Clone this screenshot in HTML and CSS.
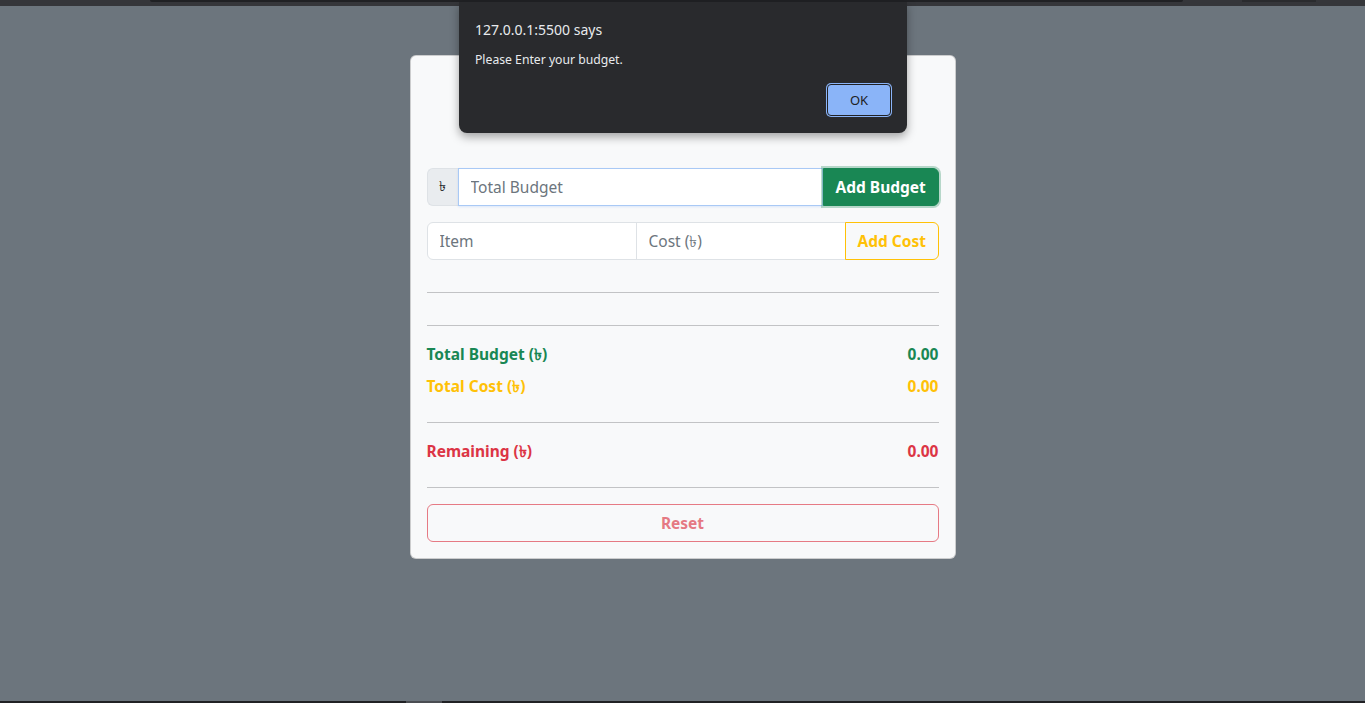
FILE: index.html
```html
<!DOCTYPE html>
<html lang="en">
<head>
<meta charset="utf-8">
<title>Budget Calculator</title>
<link rel="stylesheet" href="styles.css">
</head>
<body>
  <div class="chrome-top"><div class="chrome-bar"></div><div class="chrome-pill"></div></div>
  <main class="page">
    <section class="card">
      <div class="card-body">
        <div class="input-group budget-group">
          <span class="addon">৳</span>
          <input class="field field-focus" type="number" placeholder="Total Budget">
          <button class="btn btn-success">Add Budget</button>
        </div>
        <div class="input-group cost-group">
          <input class="field" type="text" placeholder="Item">
          <input class="field" type="number" placeholder="Cost (৳)">
          <button class="btn btn-outline-warning">Add Cost</button>
        </div>
        <hr class="rule">
        <ul class="expense-list"></ul>
        <hr class="rule">
        <div class="summary-row text-success"><span>Total Budget (৳)</span><span>0.00</span></div>
        <div class="summary-row text-warning"><span>Total Cost (৳)</span><span>0.00</span></div>
        <hr class="rule">
        <div class="summary-row text-danger"><span>Remaining (৳)</span><span>0.00</span></div>
        <hr class="rule">
        <button class="btn btn-reset" disabled>Reset</button>
      </div>
    </section>
    <div class="dialog" role="alertdialog">
      <div class="dialog-title">127.0.0.1:5500 says</div>
      <div class="dialog-msg">Please Enter your budget.</div>
      <div class="dialog-actions"><button class="dialog-ok">OK</button></div>
    </div>
  </main>
  <div class="chrome-bottom"><div class="chrome-tab"></div></div>
</body>
</html>
```

FILE: styles.css
```css
* { box-sizing: border-box; }
html, body { height: 100%; }
body {
  margin: 0;
  background: #6c757d;
  font-family: "Noto Sans", "Open Sans", "DejaVu Sans", sans-serif;
  color: #212529;
  display: flex;
  flex-direction: column;
  overflow: hidden;
}
.chrome-top {
  height: 6px;
  background: #35363a;
  position: relative;
  flex: none;
}
.chrome-bar {
  position: absolute;
  left: 150px;
  width: 1033px;
  top: 0;
  height: 2px;
  background: #202124;
  border-radius: 0 0 4px 4px;
}
.chrome-pill {
  position: absolute;
  left: 1242px;
  width: 74px;
  top: 0;
  height: 2px;
  background: #2a2b2e;
}
.page {
  flex: 1;
  position: relative;
  padding-top: 49px;
}
.chrome-bottom {
  height: 2px;
  background: #202124;
  flex: none;
  position: relative;
}
.chrome-tab {
  position: absolute;
  left: 406px;
  width: 36px;
  height: 2px;
  background: #4a4d52;
}
.card {
  width: 546px;
  margin: 0 auto;
  background: #f8f9fa;
  border: 1px solid rgba(0,0,0,.175);
  border-radius: 6px;
}
.card-body {
  padding: 112px 16px 16px;
  display: flex;
  flex-direction: column;
}
.input-group {
  display: flex;
  height: 38px;
  margin-bottom: 16px;
  flex: none;
}
.addon {
  width: 31px;
  flex: none;
  display: flex;
  align-items: center;
  justify-content: center;
  background: #e9ecef;
  border: 1px solid #dee2e6;
  border-right: 0;
  border-radius: 6px 0 0 6px;
  font-size: 14px;
  color: #212529;
}
.field {
  flex: 1;
  min-width: 0;
  height: 38px;
  border: 1px solid #dee2e6;
  background: #fff;
  padding: 6px 12px;
  font: inherit;
  font-size: 15.5px;
  color: #212529;
  outline: none;
}
.field::placeholder { color: #6c757d; }
.field-focus {
  border-color: #a9c9f5;
  box-shadow: 0 1px 2px rgba(13,110,253,.12);
  position: relative;
  z-index: 1;
}
.cost-group .field:first-child {
  border-radius: 6px 0 0 6px;
}
.cost-group .field + .field { margin-left: -1px; }
.btn {
  font: inherit;
  font-size: 15.5px;
  font-weight: 700;
  padding: 6px 12px;
  border-radius: 0 6px 6px 0;
  cursor: pointer;
  white-space: nowrap;
}
.btn-success {
  width: 116px;
  flex: none;
  background: #198754;
  color: #fff;
  border: 1px solid #198754;
  box-shadow: 0 0 0 2px rgba(60,153,110,.35);
  position: relative;
  z-index: 2;
}
.btn-outline-warning {
  width: 94px;
  flex: none;
  background: transparent;
  color: #ffc107;
  border: 1px solid #ffc107;
  margin-left: -1px;
}
.rule {
  width: 100%;
  margin: 16px 0;
  border: 0;
  border-top: 1px solid #212529;
  opacity: .25;
  flex: none;
}
.expense-list {
  list-style: none;
  margin: 0;
  padding: 0;
}
.summary-row {
  display: flex;
  justify-content: space-between;
  font-weight: 700;
  font-size: 15.5px;
  line-height: 24px;
  margin-bottom: 8px;
}
.text-success { color: #198754; }
.text-warning { color: #ffc107; }
.text-danger { color: #dc3545; }
.btn-reset {
  display: block;
  width: 100%;
  height: 38px;
  flex: none;
  border-radius: 6px;
  background: transparent;
  color: #dc3545;
  border: 1px solid #dc3545;
  opacity: .65;
  cursor: default;
}
.dialog {
  position: absolute;
  left: 459px;
  top: -4px;
  width: 448px;
  height: 131px;
  background: #292a2d;
  border-radius: 0 0 8px 8px;
  box-shadow: 0 4px 10px rgba(0,0,0,.35);
  padding: 18px 16px 16px;
  color: #e8eaed;
  font-family: "Noto Sans", "Open Sans", sans-serif;
}
.dialog-title {
  font-size: 14px;
  line-height: 20px;
}
.dialog-msg {
  font-size: 12.2px;
  line-height: 18px;
  margin-top: 11px;
}
.dialog-actions {
  display: flex;
  justify-content: flex-end;
  margin-top: 15px;
}
.dialog-ok {
  width: 64px;
  height: 32px;
  background: #8ab4f8;
  color: #202124;
  border: 1px solid #202124;
  border-radius: 4px;
  box-shadow: 0 0 0 1px #8ab4f8;
  font-family: inherit;
  font-size: 13px;
}
```
